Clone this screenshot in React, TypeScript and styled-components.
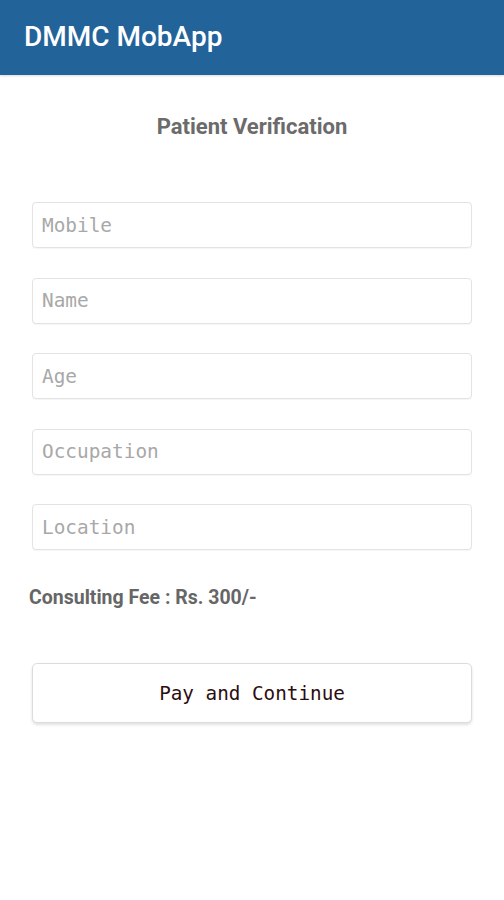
import styled, { createGlobalStyle } from "styled-components";

const GlobalStyle = createGlobalStyle`
  body {
    margin: 0;
    background: #ffffff;
    font-family: Roboto, "Liberation Sans", sans-serif;
  }
`;

const Screen = styled.div`
  width: 504px;
  min-height: 900px;
  background: #ffffff;
  display: flex;
  flex-direction: column;
`;

const AppBar = styled.header`
  height: 75px;
  background-color: #22639a;
  display: flex;
  align-items: center;
  padding: 0 24px;
  box-sizing: border-box;
  box-shadow: 0 1px 2px rgba(0, 0, 0, 0.15);
`;

const AppTitle = styled.h1`
  margin: 0 0 2px;
  color: #ffffff;
  font-family: Roboto, "Liberation Sans", sans-serif;
  font-size: 28px;
  font-weight: 500;
`;

const Content = styled.main`
  display: flex;
  flex-direction: column;
  padding: 0 32px;
`;

const Heading = styled.h2`
  margin: 38px 0 0;
  text-align: center;
  color: #6b6b6b;
  font-size: 22px;
  font-weight: 700;
  line-height: 28px;
`;

const Fields = styled.div`
  display: flex;
  flex-direction: column;
  gap: 29.5px;
  margin-top: 61px;
`;

const Field = styled.input`
  height: 46px;
  box-sizing: border-box;
  border: 1px solid #e3e3e3;
  border-radius: 4px;
  padding: 0 9px;
  font-family: "DejaVu Sans Mono", "Liberation Mono", monospace;
  font-size: 19.4px;
  color: #333;
  background: #fff;
  box-shadow: 0 1px 1px rgba(0, 0, 0, 0.04);
  outline: none;

  &::placeholder {
    color: #a8a8a8;
  }
`;

const Fee = styled.p`
  margin: 36px 0 0 -3px;
  color: #666666;
  font-size: 19.5px;
  font-weight: 700;
  line-height: 24px;
`;

const PayButton = styled.button`
  margin-top: 53px;
  height: 60px;
  border: 1px solid #dcdcdc;
  border-radius: 5px;
  background: #ffffff;
  box-shadow: 0 2px 3px rgba(0, 0, 0, 0.12);
  font-family: "DejaVu Sans Mono", "Liberation Mono", monospace;
  font-size: 19.3px;
  color: #2b0d10;
  cursor: pointer;
`;

const fields = ["Mobile", "Name", "Age", "Occupation", "Location"];

export default function App() {
  return (
    <Screen>
      <GlobalStyle />
      <AppBar>
        <AppTitle>DMMC MobApp</AppTitle>
      </AppBar>
      <Content>
        <Heading>Patient Verification</Heading>
        <Fields>
          {fields.map((f) => (
            <Field key={f} placeholder={f} />
          ))}
        </Fields>
        <Fee>Consulting Fee : Rs. 300/-</Fee>
        <PayButton>Pay and Continue</PayButton>
      </Content>
    </Screen>
  );
}
